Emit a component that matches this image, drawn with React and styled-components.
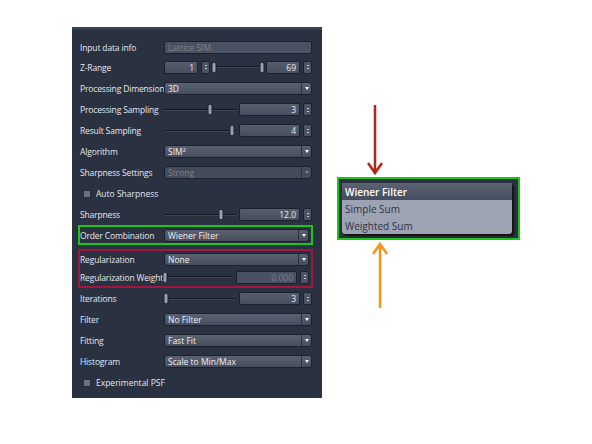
import React from "react";
import styled, { createGlobalStyle } from "styled-components";

const G = createGlobalStyle`
  body { margin: 0; background: #fff; font-family: "Open Sans", "Liberation Sans", sans-serif; }
`;
const Page = styled.div`display:flex; padding: 27px 0 0 72px; width:592px; height:444px; box-sizing:border-box;`;
const Panel = styled.div`
  width: 250px; height: 371px; background: #2a3140; box-sizing: border-box;
  padding: 8px 8px 0 8px; display:flex; flex-direction:column; border-top: 3px solid #39404e;
`;
const Row = styled.div`display:flex; align-items:center; height:${p => p.h || 21}px; flex-shrink:0;`;
const Label = styled.div`width:84px; font-size:8.5px; color:#e4e7ee; white-space:nowrap; flex-shrink:0; letter-spacing:-0.15px;`;
const Ctrl = styled.div`flex:1; display:flex; align-items:center; gap:3px; min-width:0; padding-right:2px;`;
const Box = styled.div`
  height: 11px; flex: ${p => p.flex || "none"}; width:${p => p.w ? p.w + "px" : "auto"};
  background: ${p => p.dis ? "#4a5162" : "linear-gradient(#565d6d,#474e5e)"};
  border:1px solid #1c212b; border-radius:2px; display:flex; align-items:center;
  font-size:8.5px; color:${p => p.dis ? "#7b8190" : "#e8eaf0"}; padding:0 3px;
  justify-content:${p => p.right ? "flex-end" : "flex-start"}; box-sizing:content-box; min-width:0;
`;
const Spin = styled.div`
  width:7px; height:11px; background:#4d5464; border:1px solid #1c212b; border-radius:2px;
  display:flex; flex-direction:column; align-items:center; justify-content:center; gap:2px;
  &::before,&::after{content:""; width:2px; height:1px; background:#c9ccd4;}
`;
const Drop = styled.div`
  flex:1; height:11px; display:flex; border:1px solid #1c212b; border-radius:3px; overflow:hidden;
  background:${p => p.dis ? "#444b5a" : "linear-gradient(#5a6171,#464d5c)"};
  font-size:8.5px; color:${p => p.dis ? "#7b8190" : "#eef0f4"}; align-items:center;
`;
const DropText = styled.div`flex:1; padding-left:3px;`;
const Arrow = styled.div`
  width:9px; height:100%; border-left:1px solid #2a303c; display:flex; align-items:center; justify-content:center;
  &::after{content:""; border-left:2.5px solid transparent; border-right:2.5px solid transparent; border-top:3px solid ${p => p.dis ? "#7b8190" : "#fff"};}
`;
const Slider = styled.div`
  flex:${p => p.flex || 1}; height:11px; position:relative; display:flex; align-items:center;
  &::before{content:""; position:absolute; left:0; right:0; height:1px; background:#14181f; border-bottom:1px solid #3e4554;}
`;
const Thumb = styled.div`
  position:absolute; left:${p => p.pos}%; width:3px; height:9px; background:#9aa0ac; border-radius:2px; border:1px solid #1c212b; transform:translateX(-50%);
`;
const Check = styled.div`display:flex; align-items:center; gap:5px; font-size:8.5px; color:#e4e7ee; padding-left:3px;`;
const CB = styled.div`width:6px; height:6px; background:#6b7180; border:1px solid #262b35;`;
const Outline = styled.div`
  border:2px solid ${p => p.c}; margin:0 1px 0 -2px; display:flex; flex-direction:column; flex-shrink:0;
`;
const Gap = styled.div`height:${p => p.h}px; flex-shrink:0;`;
const Side = styled.div`display:flex; flex-direction:column; margin-left:15px; padding-top:78px; align-items:flex-start;`;
const Menu = styled.div`border:2px solid #1fc41b; background:#2a3140; padding:4px 6px 4px 3px; width:183px; box-sizing:border-box;`;
const MenuInner = styled.div`background:#9ea3b3; border-radius:0 0 3px 3px; overflow:hidden; box-shadow:2px 2px 2px #111;`;
const MItem = styled.div`
  height:17px; display:flex; align-items:center; padding-left:3px; font-size:10px;
  color:${p => p.sel ? "#fff" : "#2e3442"}; background:${p => p.sel ? "linear-gradient(#5b6274,#454c5d)" : "transparent"};
  font-weight:${p => p.sel ? 600 : 400};
`;
const ArrowSvg = styled.svg`display:block; margin-left:${p => p.ml}px;`;

const Spinner = ({ v, w, dis, flex }) => (
  <><Box right w={w} flex={flex} dis={dis}>{v}</Box><Spin /></>
);

export default function App() {
  const dd = (label, v, dis) => (
    <Row><Label>{label}</Label><Ctrl><Drop dis={dis}><DropText>{v}</DropText><Arrow dis={dis} /></Drop></Ctrl></Row>
  );
  const sl = (label, pos, v, dis) => (
    <Row><Label>{label}</Label><Ctrl><Slider><Thumb pos={pos} /></Slider><Spinner v={v} w={53} dis={dis} /></Ctrl></Row>
  );
  return (
    <Page>
      <G />
      <Panel>
        <Row h={18}><Label>Input data info</Label><Ctrl><Box flex="1" dis>Lattice SIM</Box></Ctrl></Row>
        <Row h={22}><Label>Z-Range</Label><Ctrl><Spinner v="1" w={26} /><Slider><Thumb pos={2} /><Thumb pos={98} /></Slider><Spinner v="69" w={26} /></Ctrl></Row>
        {dd("Processing Dimension", "3D")}
        {sl("Processing Sampling", 64, "3")}
        {sl("Result Sampling", 95, "4")}
        {dd("Algorithm", "SIM²")}
        {dd("Sharpness Settings", "Strong", true)}
        <Row><Check><CB />Auto Sharpness</Check></Row>
        {sl("Sharpness", 79, "12.0")}
        <Outline c="#1fc41b">
          <Row h={16}><Label>Order Combination</Label><Ctrl><Drop><DropText>Wiener Filter</DropText><Arrow /></Drop></Ctrl></Row>
        </Outline>
        <Gap h={4} />
        <Outline c="#a3163f">
          <Row h={17}><Label>Regularization</Label><Ctrl><Drop><DropText>None</DropText><Arrow /></Drop></Ctrl></Row>
          <Row h={18}><Label>Regularization Weight</Label><Ctrl><Slider><Thumb pos={1} /></Slider><Spinner v="0.000" w={53} dis /></Ctrl></Row>
        </Outline>
        {sl("Iterations", 3, "3")}
        {dd("Filter", "No Filter")}
        {dd("Fitting", "Fast Fit")}
        {dd("Histogram", "Scale to Min/Max")}
        <Row><Check><CB />Experimental PSF</Check></Row>
      </Panel>
      <Side>
        <ArrowSvg ml={30} width="16" height="72" viewBox="0 0 16 72">
          <path d="M8 0 V68 M1 58 L8 68 L15 58" stroke="#b1261b" strokeWidth="2.5" fill="none" />
        </ArrowSvg>
        <Menu>
          <MenuInner>
            <MItem sel>Wiener Filter</MItem>
            <MItem>Simple Sum</MItem>
            <MItem>Weighted Sum</MItem>
          </MenuInner>
        </Menu>
        <ArrowSvg ml={35} width="16" height="68" viewBox="0 0 16 68">
          <path d="M8 4 V68 M1 14 L8 4 L15 14" stroke="#f7941d" strokeWidth="2.5" fill="none" />
        </ArrowSvg>
      </Side>
    </Page>
  );
}
